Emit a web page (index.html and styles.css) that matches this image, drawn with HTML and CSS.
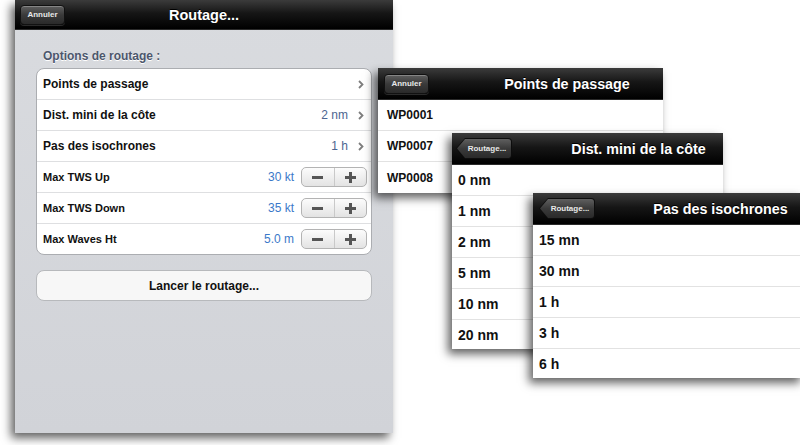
FILE: index.html
```html
<!DOCTYPE html>
<html lang="fr">
<head>
<meta charset="utf-8">
<title>Routage</title>
<link rel="stylesheet" href="styles.css">
</head>
<body>
<div class="stage">
  <section class="panel panel-main">
    <header class="bar bar-main">
      <span class="btn">Annuler</span>
      <h1 class="bar-title">Routage...</h1>
      <span></span>
    </header>
    <div class="main-body">
      <div class="group-label">Options de routage :</div>
      <div class="card">
        <div class="row row-nav">
          <span class="row-label">Points de passage</span>
          <svg class="chev" width="6" height="9" viewBox="0 0 6 9"><polyline points="1,1 4.5,4.5 1,8" fill="none" stroke="#7d7d7d" stroke-width="1.8"/></svg>
        </div>
        <div class="row row-nav">
          <span class="row-label">Dist. mini de la côte</span>
          <span class="value value-nav">2 nm</span>
          <svg class="chev" width="6" height="9" viewBox="0 0 6 9"><polyline points="1,1 4.5,4.5 1,8" fill="none" stroke="#7d7d7d" stroke-width="1.8"/></svg>
        </div>
        <div class="row row-nav">
          <span class="row-label">Pas des isochrones</span>
          <span class="value value-nav">1 h</span>
          <svg class="chev" width="6" height="9" viewBox="0 0 6 9"><polyline points="1,1 4.5,4.5 1,8" fill="none" stroke="#7d7d7d" stroke-width="1.8"/></svg>
        </div>
        <div class="row row-step">
          <span class="row-label small">Max TWS Up</span>
          <span class="value value-step">30 kt</span>
          <span class="stepper"><span class="step minus"></span><span class="step plus"></span></span>
        </div>
        <div class="row row-step">
          <span class="row-label small">Max TWS Down</span>
          <span class="value value-step">35 kt</span>
          <span class="stepper"><span class="step minus"></span><span class="step plus"></span></span>
        </div>
        <div class="row row-step">
          <span class="row-label small">Max Waves Ht</span>
          <span class="value value-step">5.0 m</span>
          <span class="stepper"><span class="step minus"></span><span class="step plus"></span></span>
        </div>
      </div>
      <div class="launch">Lancer le routage...</div>
    </div>
  </section>

  <section class="panel panel-wp">
    <header class="bar bar-sub">
      <span class="btn">Annuler</span>
      <h2 class="bar-title sub-title">Points de passage</h2>
    </header>
    <div class="list list-wp">
      <div class="item">WP0001</div>
      <div class="item">WP0007</div>
      <div class="item">WP0008</div>
    </div>
  </section>

  <section class="panel panel-dist">
    <header class="bar bar-sub bar-dist">
      <span class="back"><span class="back-in">Routage...</span></span>
      <h2 class="bar-title sub-title">Dist. mini de la côte</h2>
    </header>
    <div class="list list-big">
      <div class="item">0 nm</div>
      <div class="item">1 nm</div>
      <div class="item">2 nm</div>
      <div class="item">5 nm</div>
      <div class="item">10 nm</div>
      <div class="item">20 nm</div>
    </div>
  </section>

  <section class="panel panel-iso">
    <header class="bar bar-sub">
      <span class="back"><span class="back-in">Routage...</span></span>
      <h2 class="bar-title sub-title">Pas des isochrones</h2>
    </header>
    <div class="list list-big">
      <div class="item">15 mn</div>
      <div class="item">30 mn</div>
      <div class="item">1 h</div>
      <div class="item">3 h</div>
      <div class="item">6 h</div>
    </div>
  </section>
</div>
</body>
</html>
```

FILE: styles.css
```css
* { box-sizing: border-box; }

html, body {
  margin: 0;
  padding: 0;
  background: #ffffff;
}

body {
  font-family: "Liberation Sans", Arial, sans-serif;
  width: 800px;
  height: 445px;
  overflow: hidden;
}

.stage {
  position: relative;
  width: 800px;
  height: 445px;
  overflow: hidden;
}

.panel {
  position: absolute;
  display: flex;
  flex-direction: column;
  box-shadow: -4px 5px 9px rgba(0, 0, 0, 0.62);
}

/* ---------- main panel ---------- */
.panel-main {
  left: 15px;
  top: 0;
  width: 378px;
  height: 433px;
  background: linear-gradient(#d9dbdf, #d1d3d8);
}

.bar {
  background: linear-gradient(#3b3b3b 0%, #161616 45%, #000 100%);
  border-bottom: 1px solid #2a2a2a;
  color: #fff;
  flex: none;
}

.bar-main {
  height: 30px;
  display: grid;
  grid-template-columns: 1fr auto 1fr;
  align-items: center;
  padding: 0 5px;
}

.bar-title {
  margin: 0;
  font-size: 14px;
  font-weight: bold;
  color: #fff;
  text-shadow: 0 -1px 0 #000;
}

.bar-main .bar-title { font-size: 14.5px; }

.btn {
  justify-self: start;
  display: inline-flex;
  align-items: center;
  justify-content: center;
  height: 20px;
  width: 45px;
  border-radius: 4px;
  border: 1px solid #111;
  background: linear-gradient(#5f5f5f, #3a3a3a 50%, #2a2a2a);
  box-shadow: inset 0 1px 0 rgba(255,255,255,0.25), 0 1px 0 rgba(255,255,255,0.15);
  color: #e8e8e8;
  font-size: 8px;
  font-weight: bold;
}

.main-body {
  padding: 18px 21px 0 21px;
  display: flex;
  flex-direction: column;
}

.group-label {
  padding-left: 7px;
  height: 16px;
  line-height: 16px;
  font-size: 12px;
  font-weight: bold;
  color: #4c566c;
  text-shadow: 0 1px 0 #fff;
}

.card {
  margin-top: 4px;
  background: #fff;
  border: 1px solid #abadb1;
  border-radius: 8px;
  overflow: hidden;
}

.row {
  display: flex;
  align-items: center;
  height: 31px;
  border-bottom: 1px solid #dedfe1;
  padding-left: 6px;
}

.row:last-child {
  height: 30px;
  border-bottom: none;
}

.row-nav { padding-right: 7px; }
.row-step { padding-right: 4px; }

.row-label {
  flex: 1;
  font-size: 12px;
  font-weight: bold;
  color: #111;
}

.row-label.small { font-size: 11px; }

.value {
  font-size: 12px;
}

.value-nav {
  color: #4c6590;
  margin-right: 10px;
}

.value-step {
  color: #3b79c9;
  margin-right: 7px;
}

.chev { display: block; }

.stepper {
  display: flex;
  width: 66px;
  height: 20px;
  border: 1px solid #b3b3b3;
  border-radius: 5px;
  background: linear-gradient(#fcfcfc, #e3e3e3);
  overflow: hidden;
}

.step {
  flex: 1;
  position: relative;
}

.step + .step { border-left: 1px solid #c9c9c9; }

.minus::before,
.plus::before,
.plus::after {
  content: "";
  position: absolute;
  left: 50%;
  top: 50%;
  background: #555;
}

.minus::before,
.plus::before {
  width: 11px;
  height: 3px;
  margin-left: -5.5px;
  margin-top: -1.5px;
}

.plus::after {
  width: 3px;
  height: 11px;
  margin-left: -1.5px;
  margin-top: -5.5px;
}

.launch {
  margin-top: 15px;
  height: 31px;
  border: 1px solid #b7b9bc;
  border-radius: 8px;
  background: #f7f7f7;
  display: flex;
  align-items: center;
  justify-content: center;
  font-size: 12px;
  font-weight: bold;
  color: #111;
}

/* ---------- sub panels ---------- */
.panel-wp {
  left: 378px;
  top: 68px;
  width: 285px;
  background: #fff;
}

.panel-dist {
  left: 452px;
  top: 133px;
  width: 271px;
  background: #fff;
}

.panel-iso {
  left: 533px;
  top: 193px;
  width: 271px;
  background: #fff;
}

.bar-sub {
  height: 32px;
  display: flex;
  align-items: center;
  padding: 0 6px;
}

.bar-dist { padding-left: 4px; }

.sub-title {
  flex: 1;
  text-align: center;
  padding-left: 48px;
  font-size: 14.3px;
}

.back {
  flex: none;
  display: block;
  width: 56px;
  height: 21px;
  padding: 1px;
  background: #0d0d0d;
  border-radius: 0 4px 4px 0;
  clip-path: polygon(9px 0, 100% 0, 100% 100%, 9px 100%, 0 50%);
}

.back-in {
  display: flex;
  align-items: center;
  justify-content: center;
  height: 100%;
  padding-left: 6px;
  background: linear-gradient(#5f5f5f, #3a3a3a 50%, #2a2a2a);
  border-radius: 0 3px 3px 0;
  clip-path: polygon(8px 0, 100% 0, 100% 100%, 8px 100%, 0 50%);
  color: #e8e8e8;
  font-size: 8px;
  font-weight: bold;
}

.list { display: flex; flex-direction: column; }

.item {
  height: 31px;
  display: flex;
  align-items: center;
  border-bottom: 1px solid #e2e2e2;
  color: #111;
  font-weight: bold;
}

.item:last-child { border-bottom: none; height: 29px; }

.list-wp .item {
  padding-left: 9px;
  font-size: 12px;
}

.list-wp .item:last-child { height: 31px; }

.list-big .item {
  padding-left: 6px;
  font-size: 14px;
}
```
